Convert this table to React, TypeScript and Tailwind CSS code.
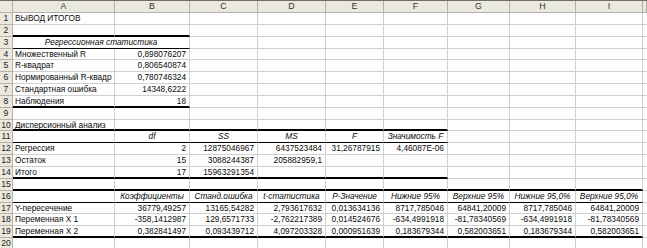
type Border = 'thick' | 'thin' | undefined

type Cell = {
  t?: string
  a?: 'l' | 'r' | 'c'
  i?: boolean
  b?: Border
  wide?: boolean
}

const colW = [
  'w-[13px]',
  'w-[102px]',
  'w-[75px]',
  'w-[68px]',
  'w-[68px]',
  'w-[58px]',
  'w-[64px]',
  'w-[62px]',
  'w-[66px]',
  'w-[67px]',
  'w-[4px]',
]

const letters = ['', 'A', 'B', 'C', 'D', 'E', 'F', 'G', 'H', 'I', '']

const L = (t: string, b?: Border): Cell => ({ t, a: 'l', b })
const R = (t: string, b?: Border): Cell => ({ t, a: 'r', b })
const H = (t: string, b?: Border): Cell => ({ t, a: 'c', i: true, b })
const E = (b?: Border): Cell => ({ b })

const fill = (cells: Cell[], n = 9): Cell[] => {
  const out = [...cells]
  while (out.length < n) out.push(E())
  return out
}
const line = (b: Border, n: number): Cell[] => Array.from({ length: n }, () => E(b))

const rows: Cell[][] = [
  fill([L('ВЫВОД ИТОГОВ')]),
  fill(line('thick', 2)),
  // merged A:B
  [{ t: 'Регрессионная статистика', a: 'c', i: true, b: 'thin', wide: true }, ...line(undefined, 7)],
  fill([L('Множественный R'), R('0,898076207')]),
  fill([L('R-квадрат'), R('0,806540874')]),
  fill([L('Нормированный R-квадр'), R('0,780746324')]),
  fill([L('Стандартная ошибка'), R('14348,6222')]),
  fill([L('Наблюдения', 'thick'), R('18', 'thick')]),
  fill([]),
  fill([L('Дисперсионный анализ', 'thick'), ...line('thick', 5)]),
  fill([E('thin'), H('df', 'thin'), H('SS', 'thin'), H('MS', 'thin'), H('F', 'thin'), H('Значимость F', 'thin')]),
  fill([L('Регрессия'), R('2'), R('12875046967'), R('6437523484'), R('31,26787915'), R('4,46087E-06')]),
  fill([L('Остаток'), R('15'), R('3088244387'), R('205882959,1')]),
  fill([L('Итого', 'thick'), R('17', 'thick'), R('15963291354', 'thick'), E('thick'), E('thick'), E('thick')]),
  line('thick', 9),
  [
    E('thin'),
    H('Коэффициенты', 'thin'),
    H('Станд.ошибка', 'thin'),
    H('t-статистика', 'thin'),
    H('P-Значение', 'thin'),
    H('Нижние 95%', 'thin'),
    H('Верхние 95%', 'thin'),
    H('Нижние 95,0%', 'thin'),
    H('Верхние 95,0%', 'thin'),
  ],
  [
    L('Y-пересечение'),
    R('36779,49257'),
    R('13165,54282'),
    R('2,793617632'),
    R('0,013634136'),
    R('8717,785046'),
    R('64841,20009'),
    R('8717,785046'),
    R('64841,20009'),
  ],
  [
    L('Переменная X 1'),
    R('-358,1412987'),
    R('129,6571733'),
    R('-2,762217389'),
    R('0,014524676'),
    R('-634,4991918'),
    R('-81,78340569'),
    R('-634,4991918'),
    R('-81,78340569'),
  ],
  [
    L('Переменная X 2', 'thick'),
    R('0,382841497', 'thick'),
    R('0,093439712', 'thick'),
    R('4,097203328', 'thick'),
    R('0,000951639', 'thick'),
    R('0,183679344', 'thick'),
    R('0,582003651', 'thick'),
    R('0,183679344', 'thick'),
    R('0,582003651', 'thick'),
  ],
  fill([]),
]

const borderCls = (b: Border) =>
  b === 'thick'
    ? 'border-b-2 border-b-black'
    : b === 'thin'
      ? 'border-b border-b-black'
      : 'border-b border-b-[#d0d0d0]'

const alignCls = (a?: 'l' | 'r' | 'c') =>
  a === 'r' ? 'text-right pr-[3px]' : a === 'c' ? 'text-center' : 'text-left pl-[2px]'

function Row({ n, cells }: { n: number; cells: Cell[] }) {
  let col = 1
  return (
    <div className="flex h-[11.85px] shrink-0">
      <div className="w-[13px] shrink-0 bg-[#ebe9dd] border-r border-b border-[#b4b2a6] text-center text-[#222] text-[8.6px] leading-[11px] overflow-hidden">
        {n}
      </div>
      {cells.map((c, k) => {
        const w = c.wide ? 'w-[177px]' : colW[col]
        col += c.wide ? 2 : 1
        return (
          <div
            key={k}
            className={`${w} shrink-0 border-r border-r-[#d0d0d0] ${borderCls(c.b)} ${alignCls(c.a)} ${
              c.i ? 'italic' : ''
            } overflow-hidden whitespace-nowrap leading-[11px] text-[#0a0a0a]`}
          >
            {c.t}
          </div>
        )
      })}
      <div className="w-[4px] shrink-0 border-b border-b-[#d0d0d0]" />
    </div>
  )
}

export default function App() {
  return (
    <div className="w-[647px] h-[248px] overflow-hidden bg-white font-['Liberation_Sans',Arial,sans-serif] text-[8.3px]">
      {/* column headers */}
      <div className="flex h-[13px] border-t border-t-[#6e6e6e] bg-[#ebe9dd]">
        {letters.map((l, k) => (
          <div
            key={k}
            className={`${colW[k]} shrink-0 border-r border-b border-[#b4b2a6] text-center text-[#333] text-[8.8px] leading-[11px]`}
          >
            {l}
          </div>
        ))}
      </div>
      {rows.map((cells, k) => (
        <Row key={k} n={k + 1} cells={cells} />
      ))}
    </div>
  )
}
